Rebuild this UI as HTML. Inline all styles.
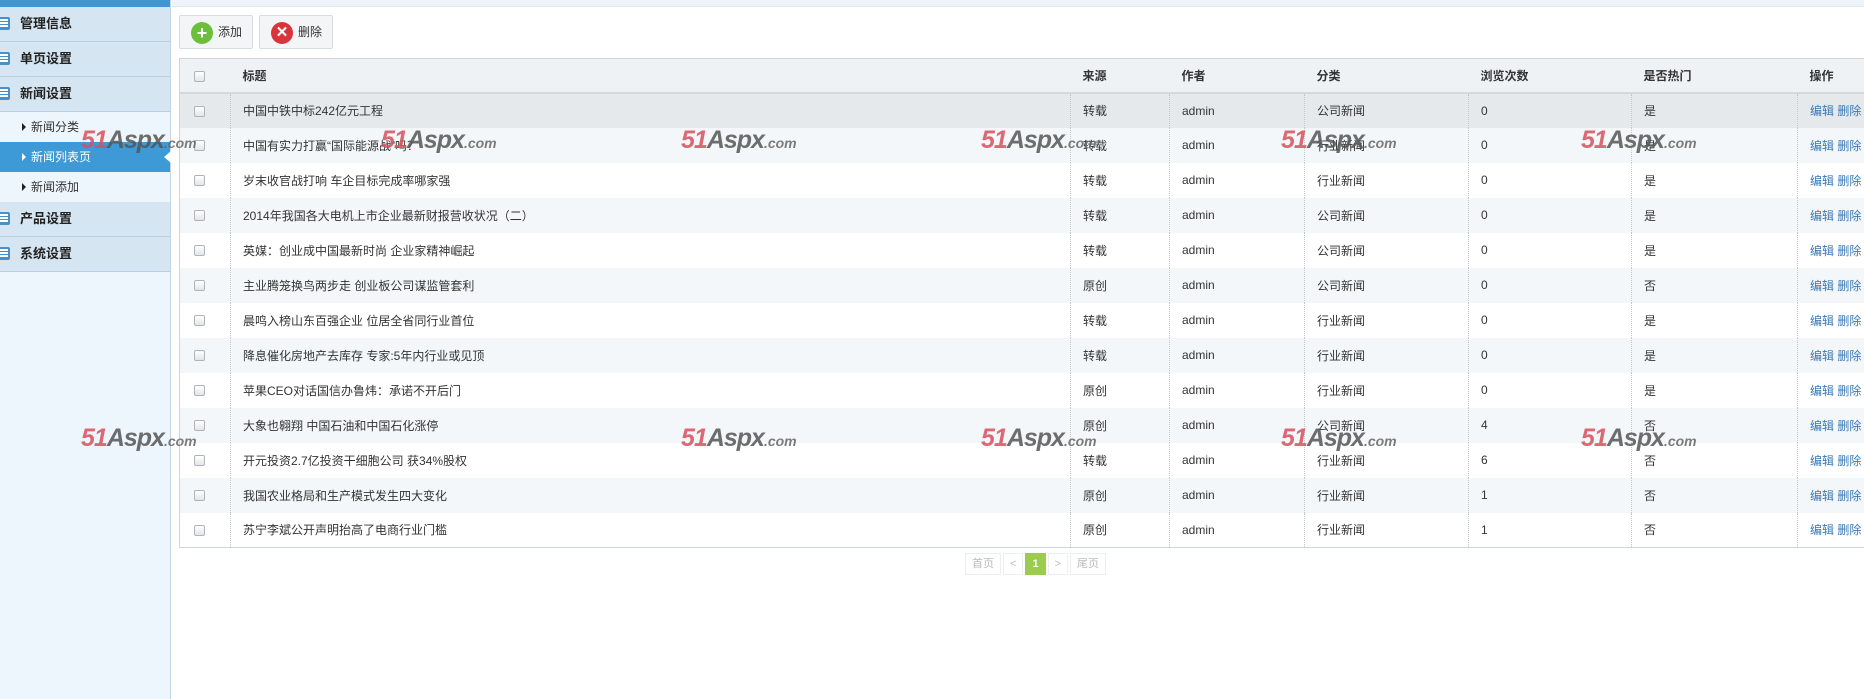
<!DOCTYPE html>
<html><head><meta charset="utf-8"><style>
*{margin:0;padding:0;box-sizing:border-box}
body{width:1864px;height:699px;overflow:hidden;background:#fff;font-family:"Liberation Sans","Noto Sans CJK SC",sans-serif;font-size:12px;color:#333;position:relative}
#side{position:absolute;left:0;top:0;width:171px;height:699px;background:#eef6fd;border-right:1px solid #c5d6e4}
#side .top{height:7px;background:#3f96d0}
.m{height:35px;background:#d5e6f2;border-bottom:1px solid #b8cfdf;font-weight:bold;font-size:13px;line-height:34px;padding-left:20px;position:relative;color:#222}
.m i{position:absolute;left:-2px;top:10px;width:12px;height:13px;border:2px solid #4a8fc5;border-radius:2px;background:repeating-linear-gradient(#fff 0 2px,#4a8fc5 2px 3px)}
.s{height:30px;line-height:30px;padding-left:31px;font-size:12px;color:#333;position:relative}
.s:before{content:"";position:absolute;left:22px;top:11px;border-left:4px solid #222;border-top:4px solid transparent;border-bottom:4px solid transparent}
.s.a{background:#3d9ad6;color:#fff}
.s.a:before{border-left-color:#fff}
.s.a:after{content:"";position:absolute;right:-1px;top:9px;border-right:7px solid #fff;border-top:6px solid transparent;border-bottom:6px solid transparent}
#topbar{position:absolute;left:172px;top:0;right:0;height:7px;background:#eef4fa;border-bottom:1px solid #dde7ef}
.btn{position:absolute;top:15px;height:34px;width:74px;border:1px solid #d8dde2;background:#f4f5f6;border-radius:2px;font-size:12px;line-height:32px;padding-left:38px}
.btn b{position:absolute;left:11px;top:6px;width:22px;height:22px;border-radius:50%;color:#fff;font-size:18px;line-height:22px;text-align:center;font-weight:bold}
#tbl{position:absolute;left:179px;top:58px;width:1700px;border:1px solid #cfd5da;border-collapse:collapse}
#tbl td,#tbl th{height:35px;font-weight:normal;text-align:left;padding-left:12px;border-left:1px dotted #c5c9cd;white-space:nowrap}
#tbl th{background:#eef2f5;font-weight:bold;border-bottom:2px solid #d4d9de;border-left:none;height:34px}
#tbl tr:nth-child(odd) td{background:#f4f7f9}
#tbl tr.h td{background:#e6e9ec}
.cb{display:inline-block;width:11px;height:11px;border:1px solid #b0b4b8;border-radius:2px;background:linear-gradient(#fff,#e2e4e6);vertical-align:middle}
a{color:#3a78b5;text-decoration:none}
.wm{position:absolute;font-weight:bold;font-style:italic;font-size:25px;color:#d8505c;letter-spacing:-1px;opacity:.85}
.wm span{color:#555}.wm small{font-size:14px;color:#666;letter-spacing:0}
#pg{position:absolute;left:965px;top:553px;height:22px;font-size:11px;color:#bbb}
#pg span{display:inline-block;border:1px solid #eee;height:22px;line-height:20px;padding:0 6px;margin-right:2px}
</style></head><body>
<div id="side"><div class="top"></div>
<div class="m"><i></i>管理信息</div>
<div class="m"><i></i>单页设置</div>
<div class="m"><i></i>新闻设置</div>
<div class="s">新闻分类</div>
<div class="s a">新闻列表页</div>
<div class="s">新闻添加</div>
<div class="m"><i></i>产品设置</div>
<div class="m"><i></i>系统设置</div>
</div>
<div id="topbar"></div>
<div class="btn" style="left:179px"><b style="background:#6cbf3a">+</b>添加</div>
<div class="btn" style="left:259px"><b style="background:#d8343a;font-size:15px">✕</b>删除</div>
<table id="tbl">
<tr><th style="width:51px;padding-left:14px"><span class="cb"></span></th><th style="width:840px">标题</th><th style="width:99px">来源</th><th style="width:135px">作者</th><th style="width:164px">分类</th><th style="width:163px">浏览次数</th><th style="width:166px">是否热门</th><th>操作</th></tr>
<tr class="h"><td style="border-left:none;padding-left:14px"><span class="cb"></span></td><td>中国中铁中标242亿元工程</td><td>转载</td><td>admin</td><td>公司新闻</td><td>0</td><td>是</td><td><a>编辑</a> <a>删除</a></td></tr>
<tr><td style="border-left:none;padding-left:14px"><span class="cb"></span></td><td>中国有实力打赢“国际能源战”吗？</td><td>转载</td><td>admin</td><td>行业新闻</td><td>0</td><td>是</td><td><a>编辑</a> <a>删除</a></td></tr>
<tr><td style="border-left:none;padding-left:14px"><span class="cb"></span></td><td>岁末收官战打响 车企目标完成率哪家强</td><td>转载</td><td>admin</td><td>行业新闻</td><td>0</td><td>是</td><td><a>编辑</a> <a>删除</a></td></tr>
<tr><td style="border-left:none;padding-left:14px"><span class="cb"></span></td><td>2014年我国各大电机上市企业最新财报营收状况（二）</td><td>转载</td><td>admin</td><td>公司新闻</td><td>0</td><td>是</td><td><a>编辑</a> <a>删除</a></td></tr>
<tr><td style="border-left:none;padding-left:14px"><span class="cb"></span></td><td>英媒：创业成中国最新时尚 企业家精神崛起</td><td>转载</td><td>admin</td><td>公司新闻</td><td>0</td><td>是</td><td><a>编辑</a> <a>删除</a></td></tr>
<tr><td style="border-left:none;padding-left:14px"><span class="cb"></span></td><td>主业腾笼换鸟两步走 创业板公司谋监管套利</td><td>原创</td><td>admin</td><td>公司新闻</td><td>0</td><td>否</td><td><a>编辑</a> <a>删除</a></td></tr>
<tr><td style="border-left:none;padding-left:14px"><span class="cb"></span></td><td>晨鸣入榜山东百强企业 位居全省同行业首位</td><td>转载</td><td>admin</td><td>行业新闻</td><td>0</td><td>是</td><td><a>编辑</a> <a>删除</a></td></tr>
<tr><td style="border-left:none;padding-left:14px"><span class="cb"></span></td><td>降息催化房地产去库存 专家:5年内行业或见顶</td><td>转载</td><td>admin</td><td>行业新闻</td><td>0</td><td>是</td><td><a>编辑</a> <a>删除</a></td></tr>
<tr><td style="border-left:none;padding-left:14px"><span class="cb"></span></td><td>苹果CEO对话国信办鲁炜：承诺不开后门</td><td>原创</td><td>admin</td><td>行业新闻</td><td>0</td><td>是</td><td><a>编辑</a> <a>删除</a></td></tr>
<tr><td style="border-left:none;padding-left:14px"><span class="cb"></span></td><td>大象也翱翔 中国石油和中国石化涨停</td><td>原创</td><td>admin</td><td>公司新闻</td><td>4</td><td>否</td><td><a>编辑</a> <a>删除</a></td></tr>
<tr><td style="border-left:none;padding-left:14px"><span class="cb"></span></td><td>开元投资2.7亿投资干细胞公司 获34%股权</td><td>转载</td><td>admin</td><td>行业新闻</td><td>6</td><td>否</td><td><a>编辑</a> <a>删除</a></td></tr>
<tr><td style="border-left:none;padding-left:14px"><span class="cb"></span></td><td>我国农业格局和生产模式发生四大变化</td><td>原创</td><td>admin</td><td>行业新闻</td><td>1</td><td>否</td><td><a>编辑</a> <a>删除</a></td></tr>
<tr><td style="border-left:none;padding-left:14px"><span class="cb"></span></td><td>苏宁李斌公开声明抬高了电商行业门槛</td><td>原创</td><td>admin</td><td>行业新闻</td><td>1</td><td>否</td><td><a>编辑</a> <a>删除</a></td></tr>
</table>
<div id="pg"><span>首页</span><span>&lt;</span><span style="background:#9ccc4e;color:#fff;font-weight:bold;border-color:#9ccc4e">1</span><span>&gt;</span><span>尾页</span></div>
<div class="wm" style="left:81px;top:126px">51<span>Aspx</span><small>.com</small></div>
<div class="wm" style="left:381px;top:126px">51<span>Aspx</span><small>.com</small></div>
<div class="wm" style="left:681px;top:126px">51<span>Aspx</span><small>.com</small></div>
<div class="wm" style="left:981px;top:126px">51<span>Aspx</span><small>.com</small></div>
<div class="wm" style="left:1281px;top:126px">51<span>Aspx</span><small>.com</small></div>
<div class="wm" style="left:1581px;top:126px">51<span>Aspx</span><small>.com</small></div>
<div class="wm" style="left:81px;top:424px">51<span>Aspx</span><small>.com</small></div>
<div class="wm" style="left:681px;top:424px">51<span>Aspx</span><small>.com</small></div>
<div class="wm" style="left:981px;top:424px">51<span>Aspx</span><small>.com</small></div>
<div class="wm" style="left:1281px;top:424px">51<span>Aspx</span><small>.com</small></div>
<div class="wm" style="left:1581px;top:424px">51<span>Aspx</span><small>.com</small></div>
</body></html>
